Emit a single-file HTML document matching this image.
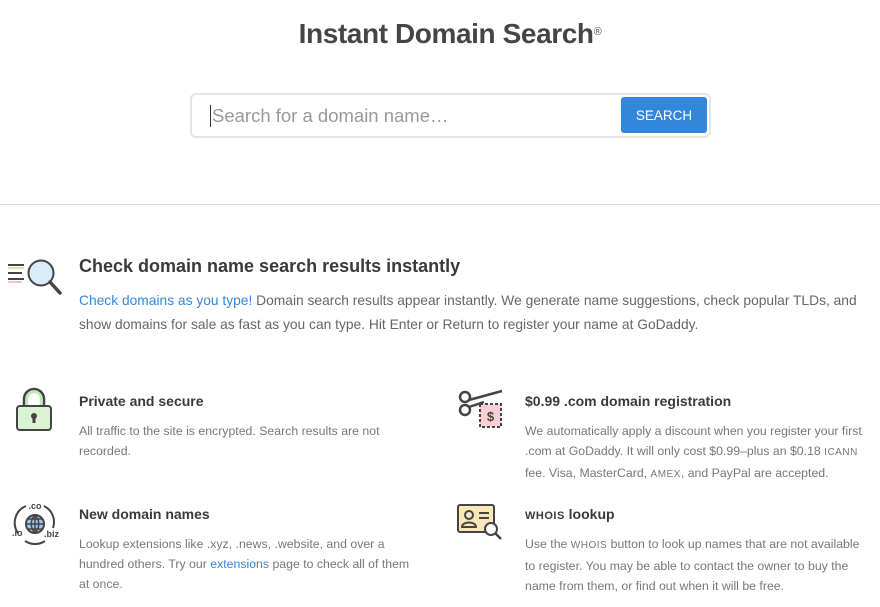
<!DOCTYPE html>
<html><head><meta charset="utf-8"><style>
*{margin:0;padding:0;box-sizing:border-box}
body{width:880px;height:607px;overflow:hidden;background:#fff;font-family:"Liberation Sans",sans-serif;color:#444;position:relative}
.abs{position:absolute}
h1{position:absolute;left:0;width:900px;top:18px;text-align:center;font-size:28px;font-weight:bold;color:#454545;letter-spacing:-0.4px}
h1 sup{font-size:11px;font-weight:normal;vertical-align:8px}
.box{left:190px;top:93px;width:521px;height:45px;border:2px solid #e4e4e4;border-radius:6px;background:#fff}
.ph{left:210px;top:105px;font-size:18.5px;color:#999;border-left:1px solid #333;padding-left:1px;line-height:22px}
.btn{left:621px;top:97px;width:86px;height:36px;background:#3486db;border-radius:3px;color:#fff;font-size:13.5px;text-align:center;line-height:38px}
.hr{left:0;top:204px;width:880px;height:1px;background:#d6d6d6}
.h2{font-size:18px;font-weight:bold;color:#3a3a3a}
.p{font-size:13.8px;line-height:24px;color:#666}
.h3{font-size:14px;font-weight:bold;color:#3a3a3a}
.s{font-size:12.3px;line-height:20px;color:#777}
a{color:#3486db;text-decoration:none}
.sc{font-size:10px;letter-spacing:.5px}
</style></head><body>
<h1>Instant Domain Search<sup>®</sup></h1>
<div class="abs box"></div>
<div class="abs ph">Search for a domain name…</div>
<div class="abs btn">SEARCH</div>
<div class="abs hr"></div>

<svg class="abs" style="left:6px;top:257px" width="60" height="44" viewBox="0 0 60 44">
<line x1="2" y1="8" x2="18" y2="8" stroke="#444" stroke-width="2"/><line x1="2" y1="11" x2="18" y2="11" stroke="#dde7a8" stroke-width="2"/>
<line x1="2" y1="16" x2="16" y2="16" stroke="#444" stroke-width="2"/><line x1="2" y1="22" x2="18" y2="22" stroke="#444" stroke-width="2"/><line x1="2" y1="25" x2="16" y2="25" stroke="#f2c4c4" stroke-width="2"/>
<circle cx="35" cy="16" r="12.5" fill="#d8ecfa" stroke="#444" stroke-width="2"/>
<line x1="44" y1="25" x2="54" y2="36" stroke="#444" stroke-width="3.5" stroke-linecap="round"/>
</svg>
<div class="abs h2" style="left:79px;top:256px">Check domain name search results instantly</div>
<div class="abs p" style="left:79px;top:289px;width:790px"><a>Check domains as you type!</a> Domain search results appear instantly. We generate name suggestions, check popular TLDs, and show domains for sale as fast as you can type. Hit Enter or Return to register your name at GoDaddy.</div>

<svg class="abs" style="left:14px;top:387px" width="40" height="46" viewBox="0 0 40 46">
<path d="M10 20V12a10 10 0 0 1 20 0v8" fill="none" stroke="#444" stroke-width="2.5"/><path d="M13 20V12a7 7 0 0 1 14 0v8" fill="none" stroke="#bfe8b8" stroke-width="2.5"/>
<rect x="3" y="19" width="34" height="24" rx="3" fill="#d9f3d4" stroke="#444" stroke-width="2"/>
<circle cx="20" cy="29" r="3" fill="#444"/><rect x="18.5" y="29" width="3" height="7" fill="#444"/>
</svg>
<div class="abs h3" style="left:79px;top:393px">Private and secure</div>
<div class="abs s" style="left:79px;top:421px;width:320px">All traffic to the site is encrypted. Search results are not recorded.</div>

<svg class="abs" style="left:456px;top:389px" width="50" height="42" viewBox="0 0 50 42">
<circle cx="9" cy="8" r="5" fill="none" stroke="#444" stroke-width="2.5"/><circle cx="9" cy="21" r="5" fill="none" stroke="#444" stroke-width="2.5"/>
<line x1="13" y1="11" x2="46" y2="2" stroke="#444" stroke-width="2.5"/><line x1="13" y1="18" x2="28" y2="13" stroke="#444" stroke-width="2.5"/>
<rect x="24" y="15" width="21" height="23" fill="#f8d0d4" stroke="#444" stroke-width="2" stroke-dasharray="3 2"/>
<text x="34.5" y="32" font-size="13" font-weight="bold" text-anchor="middle" fill="#444" font-family="Liberation Sans">$</text>
</svg>
<div class="abs h3" style="left:525px;top:393px">$0.99 .com domain registration</div>
<div class="abs s" style="left:525px;top:421px;width:345px">We automatically apply a discount when you register your first .com at GoDaddy. It will only cost $0.99–plus an $0.18 <span class="sc">ICANN</span> fee. Visa, MasterCard, <span class="sc">AMEX</span>, and PayPal are accepted.</div>

<svg class="abs" style="left:10px;top:500px" width="50" height="45" viewBox="0 0 50 45">
<text x="25" y="9" font-size="9" font-weight="bold" text-anchor="middle" fill="#444" font-family="Liberation Sans">.co</text>
<text x="2" y="36" font-size="9" font-weight="bold" fill="#444" font-family="Liberation Sans">.io</text>
<text x="34" y="37" font-size="9" font-weight="bold" fill="#444" font-family="Liberation Sans">.biz</text>
<path d="M8 33A18 18 0 0 1 16 6M34 6A18 18 0 0 1 43 28M15 41A18 18 0 0 0 35 41" fill="none" stroke="#444" stroke-width="2"/>
<circle cx="25" cy="24" r="9" fill="#9cc8ee" stroke="#444" stroke-width="2"/>
<path d="M16 24h18M25 15v18M18 19h14M18 29h14M25 15c-5 5-5 13 0 18M25 15c5 5 5 13 0 18" fill="none" stroke="#444" stroke-width="1.5"/>
</svg>
<div class="abs h3" style="left:79px;top:506px">New domain names</div>
<div class="abs s" style="left:79px;top:534px;width:340px">Lookup extensions like .xyz, .news, .website, and over a hundred others. Try our <a>extensions</a> page to check all of them at once.</div>

<svg class="abs" style="left:456px;top:502px" width="50" height="42" viewBox="0 0 50 42">
<rect x="2" y="3" width="36" height="27" rx="2" fill="#fbe6b8" stroke="#444" stroke-width="2"/>
<circle cx="13" cy="13" r="4" fill="none" stroke="#444" stroke-width="2"/><path d="M6 25c0-6 14-6 14 0z" fill="none" stroke="#444" stroke-width="2"/>
<path d="M23 11h10M23 16h10" stroke="#444" stroke-width="2"/>
<circle cx="35" cy="27" r="6" fill="#fff" stroke="#444" stroke-width="2"/><line x1="39" y1="31" x2="45" y2="37" stroke="#444" stroke-width="2.5"/>
</svg>
<div class="abs h3" style="left:525px;top:506px"><span style="font-size:11px;letter-spacing:.5px">WHOIS</span> lookup</div>
<div class="abs s" style="left:525px;top:534px;width:345px">Use the <span class="sc">WHOIS</span> button to look up names that are not available to register. You may be able to contact the owner to buy the name from them, or find out when it will be free.</div>
</body></html>
